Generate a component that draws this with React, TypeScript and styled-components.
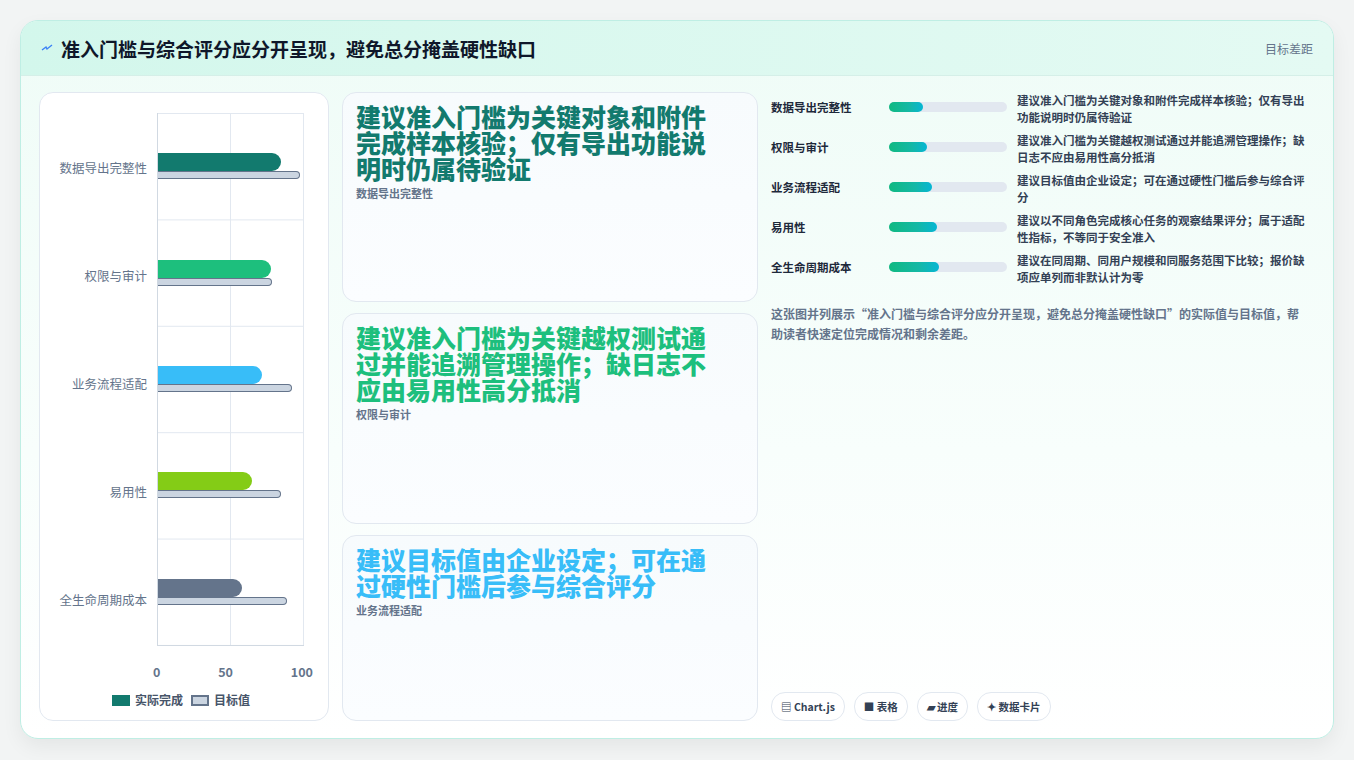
import React from "react";
import styled, { createGlobalStyle } from "styled-components";

const G = createGlobalStyle`
  html,body{margin:0;padding:0;background:#f2f4f4;}
  body{font-family:"Noto Sans CJK SC","Noto Sans",sans-serif;}
`;
const Page = styled.div`padding:20px 20px 21px 20px;width:1354px;height:760px;box-sizing:border-box;`;
const Card = styled.div`
  height:719px;box-sizing:border-box;border:1px solid #bfeee4;border-radius:18px;overflow:hidden;
  background:linear-gradient(180deg,#effcf7 0%,#f8fefc 60%,#ffffff 100%);
  box-shadow:0 8px 20px rgba(0,0,0,0.06);display:flex;flex-direction:column;`;
const Header = styled.div`
  height:55px;box-sizing:border-box;display:flex;align-items:center;justify-content:space-between;
  padding:0 20px;background:linear-gradient(90deg,#d3f7ec,#e4faf3);border-bottom:1px solid #d5efe8;`;
const Title = styled.h1`margin:0;font-size:19px;font-weight:700;color:#0f172a;display:flex;align-items:center;gap:8px;`;
const HeadRight = styled.span`font-size:12px;color:#64748b;`;
const Body = styled.div`flex:1;display:grid;grid-template-columns:290px 416px 1fr;gap:13px;padding:16px 12px 17px 18px;min-height:0;`;
const Panel = styled.div`background:#fff;border:1px solid #e2e8f0;border-radius:14px;display:flex;flex-direction:column;padding:20px 12px 12px 6px;`;
const ChartArea = styled.div`display:grid;grid-template-columns:111px 1fr;flex:1;`;
const Labels = styled.div`display:grid;grid-template-rows:repeat(5,1fr);padding-right:10px;`;
const Lab = styled.div`display:flex;align-items:center;justify-content:flex-end;font-size:12.5px;color:#64748b;white-space:nowrap;`;
const Plot = styled.div`position:relative;border-left:1px solid #d1d9e2;width:146px;height:532px;
  background-image:linear-gradient(#e2e8f0 1px,transparent 1px),linear-gradient(90deg,transparent 72px,#e2e8f0 72px,#e2e8f0 73px,transparent 73px,transparent 145px,#e2e8f0 145px);
  background-size:100% 106.4px,100% 100%;display:grid;grid-template-rows:repeat(5,1fr);border-bottom:1px solid #d1d9e2;`;
const Row = styled.div`display:flex;flex-direction:column;justify-content:center;`;
const Act = styled.div<{ c: string }>`height:18px;background:${p => p.c};border-radius:0 9px 9px 0;`;
const Tgt = styled.div`height:6px;background:#cbd5e1;border:1.5px solid #64748b;border-left:none;border-radius:0 4px 4px 0;`;
const Axis = styled.div`display:flex;justify-content:space-between;margin:8px 0 0 107px;width:160px;font-size:12.5px;color:#64748b;font-weight:600;`;
const Legend = styled.div`display:flex;justify-content:center;gap:8px;margin-top:10px;font-size:12px;color:#475569;font-weight:600;align-items:center;`;
const Sw = styled.span<{ t?: boolean }>`display:inline-block;width:18px;height:11px;margin-right:5px;vertical-align:-1px;box-sizing:border-box;
  background:${p => (p.t ? "#cbd5e1" : "#127a6e")};border:${p => (p.t ? "2px solid #64748b" : "none")};`;
const Mid = styled.div`display:grid;grid-template-rows:210px 211px 1fr;gap:11px;`;
const Note = styled.div`background:linear-gradient(180deg,#f7fbfd,#fbfdff);border:1px solid #e2e8f0;border-radius:14px;padding:10px 36px 10px 13px;`;
const Big = styled.div<{ c: string }>`font-size:25px;line-height:26px;font-weight:800;color:${p => p.c};`;
const Sub = styled.div`font-size:11px;color:#64748b;font-weight:600;margin-top:4px;`;
const Right = styled.div`display:flex;flex-direction:column;padding-right:12px;`;
const PRow = styled.div`display:grid;grid-template-columns:108px 118px 1fr;gap:10px;align-items:start;margin-bottom:7px;`;
const PLab = styled.div`font-size:11.5px;font-weight:600;color:#1e293b;padding-top:7px;`;
const Track = styled.div`height:10px;background:#e2e8f0;border-radius:5px;margin-top:10px;`;
const Fill = styled.div`height:100%;border-radius:5px;background:linear-gradient(90deg,#10b981,#14b8a6 60%,#06b6d4);`;
const PTxt = styled.div`font-size:11.5px;line-height:16.5px;font-weight:600;color:#334155;`;
const Desc = styled.p`margin:12px 0 0;padding-right:10px;font-size:12px;line-height:20px;color:#64748b;font-weight:600;`;
const Chips = styled.div`margin-top:auto;display:flex;gap:9px;`;
const Chip = styled.span`font-size:10.5px;font-weight:700;color:#334155;border:1px solid #e2e8f0;border-radius:14px;padding:6px 9px;background:#fff;`;

const data = [
  { n: "数据导出完整性", a: 85, t: 97, c: "#127a6e", w: 34, tx: "建议准入门槛为关键对象和附件完成样本核验；仅有导出功能说明时仍属待验证" },
  { n: "权限与审计", a: 78, t: 78, c: "#1dbf7d", w: 38, tx: "建议准入门槛为关键越权测试通过并能追溯管理操作；缺日志不应由易用性高分抵消" },
  { n: "业务流程适配", a: 72, t: 92, c: "#38bdf8", w: 43, tx: "建议目标值由企业设定；可在通过硬性门槛后参与综合评分" },
  { n: "易用性", a: 65, t: 84, c: "#84cc16", w: 48, tx: "建议以不同角色完成核心任务的观察结果评分；属于适配性指标，不等同于安全准入" },
  { n: "全生命周期成本", a: 58, t: 88, c: "#64748b", w: 50, tx: "建议在同周期、同用户规模和同服务范围下比较；报价缺项应单列而非默认计为零" },
];

export default function App() {
  return (
    <Page>
      <G />
      <Card>
        <Header>
          <Title>
            <svg width="12" height="10" viewBox="0 0 12 10"><path d="M1 7 L5 4 L6 6 L11 2" stroke="#3b82f6" strokeWidth="1.4" fill="none" /></svg>
            准入门槛与综合评分应分开呈现，避免总分掩盖硬性缺口
          </Title>
          <HeadRight>目标差距</HeadRight>
        </Header>
        <Body>
          <Panel>
            <ChartArea>
              <Labels>{data.map(d => <Lab key={d.n}>{d.n}</Lab>)}</Labels>
              <Plot>
                {data.map(d => (
                  <Row key={d.n}>
                    <Act c={d.c} style={{ width: d.a * 1.45 }} />
                    <Tgt style={{ width: d.t * 1.45 }} />
                  </Row>
                ))}
              </Plot>
            </ChartArea>
            <Axis><span>0</span><span>50</span><span>100</span></Axis>
            <Legend><span><Sw />实际完成</span><span><Sw t />目标值</span></Legend>
          </Panel>
          <Mid>
            {data.slice(0, 3).map(d => (
              <Note key={d.n}>
                <Big c={d.c}>{d.tx}</Big>
                <Sub>{d.n}</Sub>
              </Note>
            ))}
          </Mid>
          <Right>
            {data.map(d => (
              <PRow key={d.n}>
                <PLab>{d.n}</PLab>
                <Track><Fill style={{ width: d.w }} /></Track>
                <PTxt>{d.tx}</PTxt>
              </PRow>
            ))}
            <Desc>这张图并列展示“准入门槛与综合评分应分开呈现，避免总分掩盖硬性缺口”的实际值与目标值，帮助读者快速定位完成情况和剩余差距。</Desc>
            <Chips>
              <Chip>▤ Chart.js</Chip><Chip>■ 表格</Chip><Chip>▰ 进度</Chip><Chip>✦ 数据卡片</Chip>
            </Chips>
          </Right>
        </Body>
      </Card>
    </Page>
  );
}
